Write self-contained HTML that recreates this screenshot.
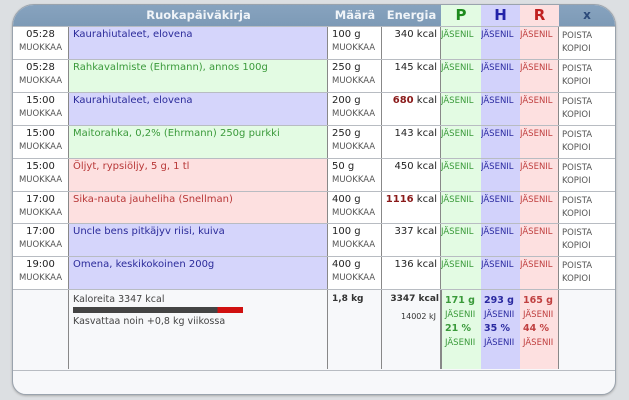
<!DOCTYPE html><html><head><style>
body{margin:0;width:629px;height:400px;background:#dcdfe2;font-family:"DejaVu Sans","Liberation Sans",sans-serif;font-size:9px;position:relative;overflow:hidden}
.box{position:absolute;left:12px;top:4px;width:602px;height:389px;background:#f7f8fa;border:1px solid #9aa3ad;border-radius:22px 22px 14px 14px;overflow:hidden;box-shadow:0 1px 2px #aaa}
.hd{position:absolute;left:0;top:0;width:602px;height:21px;background:linear-gradient(#87a3bf,#7d9ab6)}
.c{position:absolute;box-sizing:border-box}
.h{color:#f0f4f8;font-weight:bold;font-size:11.5px;text-align:center;line-height:21px}
.row{position:absolute;left:0;width:602px;height:33px;border-top:1px solid #b8bcc2}
.t{left:0;width:56px;text-align:center;color:#222;font-size:10px;padding-top:2px;background:#fff;height:33px;border-right:1px solid #888}
.m{color:#555;font-size:8.5px;display:block;margin-top:3px}
.f{left:56px;width:259px;height:33px;padding:2px 4px;border-right:1px solid #888;font-size:10px}
.q{left:315px;width:54px;height:33px;padding:2px 4px;background:#fff;border-right:1px solid #888;font-size:10px;color:#222}
.e{left:369px;width:59px;height:33px;padding:2px 3px;text-align:right;background:#fff;border-right:1px solid #888;font-size:10px;color:#222;white-space:nowrap}
.p{left:428px;width:40px;height:33px;background:#e3fbe3;color:#3a9a3a;padding-top:3px;font-size:8.5px;overflow:hidden;white-space:nowrap}
.hh{left:468px;width:39px;height:33px;background:#d2d2fb;color:#2a2aa0;padding-top:3px;font-size:8.5px;overflow:hidden;white-space:nowrap}
.r{left:507px;width:39px;height:33px;background:#fde0e0;color:#c04040;padding-top:3px;font-size:8.5px;overflow:hidden;white-space:nowrap;border-right:1px solid #888}
.x{left:546px;width:56px;height:33px;background:#fff;color:#555;font-size:8.5px;padding:3px 3px;line-height:13px}
.B{background:#d5d5fb;color:#2b2b9a}.G{background:#e3fbe3;color:#3b9a3b}.R{background:#fde0e0;color:#b83838}
</style></head><body>
<div class="box">
<div class="hd"></div>
<div class="c h" style="left:56px;width:259px">Ruokapäiväkirja</div>
<div class="c h" style="left:315px;width:54px">Määrä</div>
<div class="c h" style="left:369px;width:59px">Energia</div>
<div class="c h" style="left:428px;width:40px;background:#e3fbe3;color:#1d8a1d;font-size:15px">P</div>
<div class="c h" style="left:468px;width:39px;background:#d2d2fb;color:#2323a8;font-size:15px">H</div>
<div class="c h" style="left:507px;width:39px;background:#fde0e0;color:#c02020;font-size:15px">R</div>
<div class="c h" style="left:546px;width:56px;color:#2b4a7a;font-size:12px">x</div>

<div class="row" style="top:21px"><div class="c t">05:28<span class="m">MUOKKAA</span></div><div class="c f B">Kaurahiutaleet, elovena</div><div class="c q">100 g<span class="m">MUOKKAA</span></div><div class="c e">340 kcal</div><div class="c p">JÄSENIL</div><div class="c hh">JÄSENIL</div><div class="c r">JÄSENIL</div><div class="c x">POISTA<br>KOPIOI</div></div>
<div class="row" style="top:54px"><div class="c t">05:28<span class="m">MUOKKAA</span></div><div class="c f G">Rahkavalmiste (Ehrmann), annos 100g</div><div class="c q">250 g<span class="m">MUOKKAA</span></div><div class="c e">145 kcal</div><div class="c p">JÄSENIL</div><div class="c hh">JÄSENIL</div><div class="c r">JÄSENIL</div><div class="c x">POISTA<br>KOPIOI</div></div>
<div class="row" style="top:87px"><div class="c t">15:00<span class="m">MUOKKAA</span></div><div class="c f B">Kaurahiutaleet, elovena</div><div class="c q">200 g<span class="m">MUOKKAA</span></div><div class="c e"><b style="color:#8a1a1a">680</b> kcal</div><div class="c p">JÄSENIL</div><div class="c hh">JÄSENIL</div><div class="c r">JÄSENIL</div><div class="c x">POISTA<br>KOPIOI</div></div>
<div class="row" style="top:120px"><div class="c t">15:00<span class="m">MUOKKAA</span></div><div class="c f G">Maitorahka, 0,2% (Ehrmann) 250g purkki</div><div class="c q">250 g<span class="m">MUOKKAA</span></div><div class="c e">143 kcal</div><div class="c p">JÄSENIL</div><div class="c hh">JÄSENIL</div><div class="c r">JÄSENIL</div><div class="c x">POISTA<br>KOPIOI</div></div>
<div class="row" style="top:153px"><div class="c t">15:00<span class="m">MUOKKAA</span></div><div class="c f R">Öljyt, rypsiöljy, 5 g, 1 tl</div><div class="c q">50 g<span class="m">MUOKKAA</span></div><div class="c e">450 kcal</div><div class="c p">JÄSENIL</div><div class="c hh">JÄSENIL</div><div class="c r">JÄSENIL</div><div class="c x">POISTA<br>KOPIOI</div></div>
<div class="row" style="top:186px"><div class="c t">17:00<span class="m">MUOKKAA</span></div><div class="c f R">Sika-nauta jauheliha (Snellman)</div><div class="c q">400 g<span class="m">MUOKKAA</span></div><div class="c e"><b style="color:#8a1a1a">1116</b> kcal</div><div class="c p">JÄSENIL</div><div class="c hh">JÄSENIL</div><div class="c r">JÄSENIL</div><div class="c x">POISTA<br>KOPIOI</div></div>
<div class="row" style="top:218px"><div class="c t">17:00<span class="m">MUOKKAA</span></div><div class="c f B">Uncle bens pitkäjyv riisi, kuiva</div><div class="c q">100 g<span class="m">MUOKKAA</span></div><div class="c e">337 kcal</div><div class="c p">JÄSENIL</div><div class="c hh">JÄSENIL</div><div class="c r">JÄSENIL</div><div class="c x">POISTA<br>KOPIOI</div></div>
<div class="row" style="top:251px"><div class="c t">19:00<span class="m">MUOKKAA</span></div><div class="c f B">Omena, keskikokoinen 200g</div><div class="c q">400 g<span class="m">MUOKKAA</span></div><div class="c e">136 kcal</div><div class="c p">JÄSENIL</div><div class="c hh">JÄSENIL</div><div class="c r">JÄSENIL</div><div class="c x">POISTA<br>KOPIOI</div></div>

<div class="row" style="top:284px;height:80px;background:#f7f8fa;border-bottom:1px solid #b8bcc2">
<div class="c" style="left:0;width:56px;height:79px;border-right:1px solid #888"></div>
<div class="c" style="left:56px;width:259px;height:79px;border-right:1px solid #888;padding:4px 4px;color:#444;font-size:9.5px">Kaloreita 3347 kcal<div style="width:170px;height:6px;background:linear-gradient(90deg,#444 0 85%,#d01010 85%);margin:2px 0 3px"></div>Kasvattaa noin +0,8 kg viikossa</div>
<div class="c" style="left:315px;width:54px;height:79px;border-right:1px solid #888;padding:4px 4px;font-weight:bold;color:#333">1,8 kg</div>
<div class="c" style="left:369px;width:59px;height:79px;border-right:1px solid #888;padding:4px 1px;text-align:right;color:#333"><b>3347 kcal</b><div style="font-size:8px;margin-top:8px;padding-right:3px">14002 kJ</div></div>
<div class="c p" style="height:79px;padding:4px 3px;line-height:14px;border-left:1px solid #888;white-space:nowrap"><b style="font-size:9.5px">171 g</b><br>JÄSENII<br><b style="font-size:9.5px">21 %</b><br>JÄSENII</div>
<div class="c hh" style="height:79px;padding:4px 3px;line-height:14px"><b style="font-size:9.5px">293 g</b><br>JÄSENII<br><b style="font-size:9.5px">35 %</b><br>JÄSENII</div>
<div class="c r" style="height:79px;padding:4px 3px;line-height:14px"><b style="font-size:9.5px">165 g</b><br>JÄSENII<br><b style="font-size:9.5px">44 %</b><br>JÄSENII</div>
</div>
</div>
</body></html>
